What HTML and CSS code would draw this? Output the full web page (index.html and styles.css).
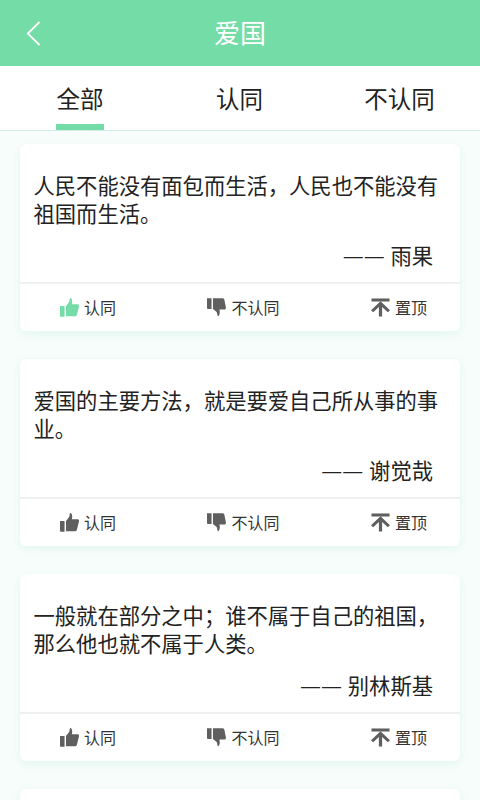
FILE: index.html
```html
<!DOCTYPE html>
<html lang="zh-CN">
<head>
<meta charset="utf-8">
<title>爱国</title>
<link rel="stylesheet" href="styles.css">
</head>
<body>
<svg class="defs" width="0" height="0" aria-hidden="true">
  <symbol id="up" viewBox="0 0 20 20">
    <path d="M0 8.500h4.800v11.200H1a1 1 0 0 1-1-1z"/>
    <path d="M6.300 8.500 9.600 4.200c.5-1 .6-2.300.7-3.400.1-.7 1-.9 1.500-.4 1.200 1.200 1.300 3.500.7 6.100h5.900c1.200 0 1.900 1 1.600 2.100l-2.200 9c-.3 1-1 1.600-2 1.600H6.300z"/>
  </symbol>
  <symbol id="down" viewBox="0 0 20 20">
    <path d="M0 0.300h4.800v11.200H1a1 1 0 0 1-1-1z"/>
    <path d="M6.300 0.300h10c1 0 1.700.6 2 1.600l1.600 8c.3 1.100-.4 2.100-1.600 2.100h-5.200c.6 2.600.5 5.400-.7 6.600-.5.500-1.400.3-1.500-.4-.1-1.100-.2-2.400-.7-3.400l-3.900-3.300z"/>
  </symbol>
  <symbol id="top" viewBox="0 0 20 20">
    <path d="M0.500 0.500h19v3.200H.5z"/>
    <path d="M10 3.500 20 13l-2.300 2.100-6-5.700V19.500H8.300V9.400l-6 5.700L0 13z"/>
  </symbol>
</svg>
<header class="topbar">
  <svg class="back" viewBox="0 0 16 26" aria-hidden="true"><path d="M13.500 1 1.800 12.500 13.500 24"/></svg>
  <h1 class="title">爱国</h1>
</header>
<nav class="tabs">
  <div class="tab active"><span class="tab-label">全部</span></div>
  <div class="tab"><span class="tab-label">认同</span></div>
  <div class="tab"><span class="tab-label">不认同</span></div>
</nav>
<main class="list">
  <article class="card">
    <div class="body">
      <p class="quote">人民不能没有面包而生活，人民也不能没有祖国而生活。</p>
      <p class="author"><span class="dash">——</span> 雨果</p>
    </div>
    <div class="actions">
      <div class="action"><svg class="icon agreed"><use href="#up"/></svg><span>认同</span></div>
      <div class="action"><svg class="icon"><use href="#down"/></svg><span>不认同</span></div>
      <div class="action"><svg class="icon"><use href="#top"/></svg><span>置顶</span></div>
    </div>
  </article>
  <article class="card">
    <div class="body">
      <p class="quote">爱国的主要方法，就是要爱自己所从事的事业。</p>
      <p class="author"><span class="dash">——</span> 谢觉哉</p>
    </div>
    <div class="actions">
      <div class="action"><svg class="icon"><use href="#up"/></svg><span>认同</span></div>
      <div class="action"><svg class="icon"><use href="#down"/></svg><span>不认同</span></div>
      <div class="action"><svg class="icon"><use href="#top"/></svg><span>置顶</span></div>
    </div>
  </article>
  <article class="card">
    <div class="body">
      <p class="quote">一般就在部分之中；谁不属于自己的祖国，那么他也就不属于人类。</p>
      <p class="author"><span class="dash">——</span> 别林斯基</p>
    </div>
    <div class="actions">
      <div class="action"><svg class="icon"><use href="#up"/></svg><span>认同</span></div>
      <div class="action"><svg class="icon"><use href="#down"/></svg><span>不认同</span></div>
      <div class="action"><svg class="icon"><use href="#top"/></svg><span>置顶</span></div>
    </div>
  </article>
  <article class="card"></article>
</main>
</body>
</html>
```
FILE: styles.css
```css
* { box-sizing: border-box; }
html, body { margin: 0; height: 100%; }
body {
  height: 800px;
  overflow: hidden;
  background: #f7fdfb;
  color: #222;
  font-family: "Noto Sans CJK SC", "Noto Sans", sans-serif;
}
.defs { position: absolute; }
.topbar {
  height: 66px;
  padding-bottom: 2px;
  background: #74dca6;
  display: flex;
  align-items: center;
  justify-content: center;
  position: relative;
}
.back {
  position: absolute;
  left: 26px;
  top: 21px;
  width: 16px;
  height: 26px;
  fill: none;
  stroke: #fff;
  stroke-width: 1.800;
}
.title {
  margin: 0;
  color: #fff;
  font-size: 26px;
  font-weight: 400;
  line-height: 64px;
}
.tabs {
  height: 65px;
  background: #fff;
  border-bottom: 1px solid #d3ebe3;
  display: grid;
  grid-template-columns: 160px 159px 161px;
}
.tab {
  display: flex;
  justify-content: center;
}
.tab-label {
  height: 64px;
  font-size: 23.500px;
  line-height: 64px;
  color: #222;
  width: 48px;
  white-space: nowrap;
  display: flex;
  justify-content: center;
}
.tab:last-child .tab-label { width: 72px; }
.active .tab-label { border-bottom: 6px solid #74dca6; }
.list {
  padding: 13px 20px 0;
  display: flex;
  flex-direction: column;
  gap: 28px;
}
.card {
  height: 187px;
  flex: none;
  background: #fff;
  border-radius: 6px;
  box-shadow: 0 3px 8px rgba(90, 200, 160, .13);
  display: flex;
  flex-direction: column;
}
.body {
  height: 140px;
  padding: 27px 14px 0 13.500px;
  border-bottom: 2px solid #eef1f0;
}
.quote {
  margin: 0;
  font-size: 21.300px;
  line-height: 28px;
  color: #222;
}
.author {
  margin: 14px 13px 0 0;
  font-size: 21.300px;
  line-height: 28px;
  text-align: right;
  color: #222;
}
.dash {
  font-family: "Liberation Sans", sans-serif;
  font-size: 19px;
  line-height: 1;
  letter-spacing: 2px;
  vertical-align: 2.500px;
}
.actions {
  height: 47px;
  padding: 0 33px 1px 40px;
  display: flex;
  justify-content: space-between;
  font-size: 16px;
  color: #333;
}
.action {
  display: flex;
  align-items: center;
  gap: 5px;
}
.icon {
  width: 19px;
  height: 19px;
  fill: #5f5f5f;
  flex: none;
}
.agreed { fill: #74dca6; }
```
